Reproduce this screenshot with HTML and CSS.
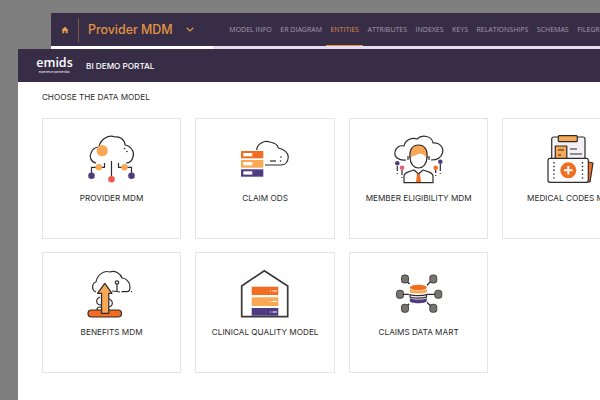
FILE: index.html
```html
<!DOCTYPE html>
<html>
  <head>
    <meta charset="UTF-8">
    <meta name="viewport" content="width=device-width, initial-scale=1.0">
    <title>BI Demo Portal</title>
    <link rel="stylesheet" href="styles.css">
  </head>
  <body>
    <!-- window behind -->
    <div class="back-window">
      <header class="back-header">
        <svg class="home-icon" viewBox="0 0 10 10"><path d="M5 1 L9.5 5.2 H8.2 V9 H6 V6.3 H4 V9 H1.8 V5.2 H.5 Z"/></svg>
        <span class="back-divider"></span>
        <span class="back-title">Provider MDM</span>
        <svg class="chevron" viewBox="0 0 8 5"><path d="M.7 .8 L4 4 L7.3 .8"/></svg>
        <nav class="back-nav">
          <a>MODEL INFO</a>
          <a>ER DIAGRAM</a>
          <a class="active">ENTITIES</a>
          <a>ATTRIBUTES</a>
          <a>INDEXES</a>
          <a>KEYS</a>
          <a>RELATIONSHIPS</a>
          <a>SCHEMAS</a>
          <a>FILEGROUPS</a>
        </nav>
      </header>
      <div class="progress"><div class="progress-fill"></div></div>
    </div>

    <!-- portal window -->
    <div class="portal">
      <header class="portal-header">
        <div class="logo">
          <span class="logo-name">emids</span>
          <span class="logo-tag">experience partnership.</span>
        </div>
        <span class="portal-title">BI DEMO PORTAL</span>
      </header>
      <main class="portal-body">
        <h1 class="section-title">CHOOSE THE DATA MODEL</h1>
        <div class="model-grid">

          <div class="card">
            <svg class="card-icon" viewBox="0 0 80 60">
              <path class="line" d="M24 30 C19 29 17 24 19 20 C20 16 24 14 27 14 C28 7 36 1 43 4 C48 3 53 7 53 12 C59 13 63 19 61 24 C60 28 57 30 54 30"/>
              <path class="line" d="M32.500 30 V34.300 H29 M39.500 28 V43 M46.500 30 V34.300 H50 M19.500 40 V34.300 H24 M59.500 40 V34.300 H55"/>
              <circle class="light" cx="30.200" cy="17.700" r="5.600"/>
              <circle class="light" cx="26.800" cy="34.300" r="3.200"/>
              <circle class="light" cx="52.500" cy="34.300" r="3.200"/>
              <circle class="purple" cx="19.500" cy="42.700" r="3.300"/>
              <circle class="red" cx="39.500" cy="46.300" r="3.300"/>
              <circle class="purple" cx="59.500" cy="42.700" r="3.300"/>
              <circle class="ink" cx="52.500" cy="15.500" r=".8"/>
              <circle class="ink" cx="55" cy="18.500" r=".8"/>
            </svg>
            <span class="card-label">PROVIDER MDM</span>
          </div>

          <div class="card">
            <svg class="card-icon" viewBox="0 0 80 60">
              <path class="line" d="M31.700 17 C32 11 39 7 45 9 C50 10 53 12 53.300 15 C59 16 63.500 20 63.300 24 C63 29 60 32 56 32 H40"/>
              <path class="line" d="M45 28 H51"/>
              <circle class="ink" cx="56" cy="24" r=".8"/>
              <circle class="ink" cx="55.500" cy="28" r=".8"/>
              <rect class="orange" x="16" y="18" width="22.300" height="7.300"/>
              <rect class="light" x="16" y="27" width="22.300" height="7.700"/>
              <rect class="purple" x="16" y="36.300" width="22.300" height="7.400"/>
              <rect class="white" x="18.300" y="20" width="9" height="3.300"/>
              <rect class="white" x="18.300" y="29" width="9" height="3.300"/>
              <rect class="white" x="18.300" y="38.300" width="9" height="3.300"/>
            </svg>
            <span class="card-label">CLAIM ODS</span>
          </div>

          <div class="card">
            <svg class="card-icon" viewBox="0 0 80 60">
              <path class="line" d="M27 27 C20 28 15 24 16 19 C17 14 21 12 25 13 C26 7 33 4 38 6 C43 1 53 3 54 10 C60 9 65 14 63.500 20 C62 25 58 27 52 27"/>
              <path class="light" d="M31 25 C30 16 34 12 39.500 12 C45 12 49 16 48 25 C45 21 42 20 39 21 C36 23 33 23 31 25 Z"/>
              <path class="line" d="M31 25 C30 16 34 12 39.500 12 C45 12 49 16 48 25"/>
              <path class="line" d="M31 24 C31 31 35 35 39.500 35 C44 35 48 31 48 24 M29 23 V27 M50 23 V27"/>
              <path class="line" d="M25 49.700 V43 C25 40 29 39 35 37 L39.500 41 L44 37 C50 39 54 40 54 43 V49.700 Z"/>
              <path class="orange" d="M38 41 H41 L42 49 H37 Z"/>
              <path class="line" d="M18.300 33 V38 M18.300 40 V41 M23 37 V42 M23 44 V45 M56.700 37 V40 M56.700 42 V43 M61.300 31 V38 M61.300 40 V41"/>
              <circle class="purple" cx="18.300" cy="30.300" r="2.300"/>
              <circle class="pink" cx="23" cy="34.700" r="2.300"/>
              <circle class="orange" cx="56.700" cy="34.700" r="2.300"/>
              <circle class="purple" cx="61.300" cy="28.700" r="2.300"/>
            </svg>
            <span class="card-label">MEMBER ELIGIBILITY MDM</span>
          </div>

          <div class="card">
            <svg class="card-icon" viewBox="0 0 80 60">
              <path class="orange line" d="M53 28 L61 30 L58 49 H53 Z"/>
              <rect class="soft line" x="19.700" y="4" width="33.300" height="26" rx="2"/>
              <rect class="light line" x="26.300" y="2.700" width="19" height="6" rx="1"/>
              <rect class="light line" x="23.300" y="13" width="11.500" height="12.500"/>
              <path class="line" d="M38 16 H45 M38 21 H50 M26 17 H32 M26 22 H29"/>
              <rect class="white line" x="16" y="25.300" width="40.300" height="24" rx="2"/>
              <circle class="orange" cx="36.300" cy="37.300" r="8"/>
              <path class="plus" d="M36.300 33 V41.600 M32 37.300 H40.600"/>
              <path class="dots" d="M22 29 V46 M50.500 29 V46"/>
            </svg>
            <span class="card-label">MEDICAL CODES MDM</span>
          </div>

          <div class="card">
            <svg class="card-icon" viewBox="0 0 80 60">
              <path class="line" d="M24 25 C19 23 20 16 24 15 C25 8 32 3 38 5 C43 3 49 7 50 11 C54 11 58 15 58 20 C58 23 57 24.700 55 24.700 H49.500"/>
              <path class="line" d="M48 25 C44 25 45 24 40 24 M45 17 V24"/>
              <circle class="white line" cx="45" cy="15.500" r="1.700"/>
              <path class="line" d="M59 24.700 H60 M28 30 C23 32 24 38 29 38 M37 32 C42 34 41 40 36 40 H28 C24 40 24 46 28 46"/>
              <rect class="orange line" x="16" y="43" width="33.500" height="7" rx="3.500"/>
              <path class="light line" d="M32.800 16.300 L40 26.300 H36.800 V46.300 H29.500 V26.300 H25.500 Z"/>
            </svg>
            <span class="card-label">BENEFITS MDM</span>
          </div>

          <div class="card">
            <svg class="card-icon" viewBox="0 0 80 60">
              <path class="line wall" d="M16.700 49.700 V19 L39.300 3.700 L62.700 19 V49.700 Z"/>
              <rect class="orange" x="26.700" y="19.700" width="26.600" height="8.300"/>
              <rect class="light" x="26.700" y="30.300" width="26.600" height="8.700"/>
              <rect class="purple" x="26.700" y="41" width="26.600" height="7.700"/>
              <path class="chip" d="M45 24 H46 M47.500 24 H52 M45 34.500 H46 M47.500 34.500 H52 M45 45 H46 M47.500 45 H52"/>
            </svg>
            <span class="card-label">CLINICAL QUALITY MODEL</span>
          </div>

          <div class="card">
            <svg class="card-icon" viewBox="0 0 80 60">
              <path class="line" d="M26 12 L39 27 L54.300 12 M21 27.300 H59.300 M26 41.300 L39 27 L54.300 41.300"/>
              <rect class="white" x="30" y="17" width="18" height="20"/>
              <ellipse class="orange" cx="39.300" cy="20.500" rx="8.500" ry="2.800"/>
              <path class="light" d="M30.800 22 V25 C31 27 47.500 27 47.800 25 V22 C44 24 35 24 30.800 22 Z"/>
              <path class="soft line" d="M31 27.500 C34 29 44 29 47.500 27.500 V30 C44 31.500 34 31.500 31 30 Z"/>
              <path class="purple" d="M30.800 31 V34 C31 37 47.500 37 47.800 34 V31 C44 33 35 33 30.800 31 Z"/>
              <g class="db">
                <rect x="22.500" y="8" width="7" height="8" rx="2.500"/>
                <rect x="50.800" y="8" width="7" height="8" rx="2.500"/>
                <rect x="17.500" y="23.300" width="7" height="8" rx="2.500"/>
                <rect x="55.800" y="23.300" width="7" height="8" rx="2.500"/>
                <rect x="22.500" y="37.300" width="7" height="8" rx="2.500"/>
                <rect x="50.800" y="37.300" width="7" height="8" rx="2.500"/>
              </g>
            </svg>
            <span class="card-label">CLAIMS DATA MART</span>
          </div>

        </div>
      </main>
    </div>
  </body>
</html>
```

FILE: styles.css
```css
html, body {
  height: 100%;
}
body {
  margin: 0;
  background-color: #7f7f7f;
  font-family: Inter, 'Liberation Sans', sans-serif;
  overflow: hidden;
}

/* window behind */
.back-window {
  position: absolute;
  left: 51px;
  top: 13px;
  right: 0;
}
.back-header {
  display: flex;
  align-items: center;
  height: 33px;
  background: #382d47;
}
.home-icon {
  flex: none;
  width: 8px;
  height: 8px;
  margin-left: 10px;
  fill: #eda04e;
}
.back-divider {
  flex: none;
  width: 1px;
  height: 24px;
  margin-left: 9px;
  background: #7b5a44;
}
.back-title {
  flex: none;
  margin-left: 9px;
  font-size: 12.4px;
  font-weight: 500;
  color: #e09440;
  white-space: nowrap;
}
.chevron {
  flex: none;
  width: 8px;
  height: 5px;
  margin-left: 13px;
  fill: none;
  stroke: #e09440;
  stroke-width: 1.2;
}
.back-nav {
  display: flex;
  align-self: stretch;
  margin-left: 31.5px;
  font-family: 'Open Sans', sans-serif;
  font-size: 7px;
  color: #a49cb1;
  white-space: nowrap;
}
.back-nav a {
  display: flex;
  align-items: center;
  padding: 1px 4.25px 0;
  border-bottom: 1px solid transparent;
}
.back-nav a.active {
  color: #df8a4c;
  border-bottom-color: #e09440;
}
.progress {
  height: 3px;
  background: #e4dbee;
}
.progress-fill {
  width: 162px;
  height: 100%;
  background: #fff;
}

/* portal window */
.portal {
  position: absolute;
  left: 18px;
  top: 49px;
  right: 0;
  bottom: 0;
  background: #fff;
  overflow: hidden;
}
.portal-header {
  display: flex;
  align-items: center;
  height: 33px;
  padding-left: 18px;
  background: #382d47;
  color: #fff;
}
.logo {
  display: flex;
  flex-direction: column;
  align-items: center;
  width: 37px;
  margin-bottom: 3px;
}
.logo-name {
  font-family: 'Open Sans', sans-serif;
  font-size: 12.5px;
  font-weight: 600;
}
.logo-tag {
  font-size: 2.8px;
  line-height: 3px;
  white-space: nowrap;
}
.portal-title {
  margin-left: 13px;
  font-size: 8.2px;
  font-weight: 500;
}
.portal-body {
  padding: 9px 23.9px 0;
}
.section-title {
  margin: 0 0 15px;
  font-size: 8.2px;
  font-weight: 400;
  line-height: 12px;
  color: #2b2b2b;
}
.model-grid {
  display: grid;
  grid-template-columns: repeat(4, 139.4px);
  grid-auto-rows: 120.5px;
  gap: 13.5px 14.15px;
}
.card {
  display: flex;
  flex-direction: column;
  align-items: center;
  padding-top: 14px;
  box-sizing: border-box;
  border: 1px solid #e5e5e5;
  background: #fff;
}
.card-icon {
  flex: none;
  width: 80px;
  height: 60px;
}
.card-label {
  margin-top: -1px;
  font-size: 8.2px;
  font-weight: 400;
  line-height: 12px;
  color: #2b2b2b;
  white-space: nowrap;
}

/* icon colours */
.line {
  fill: none;
  stroke: #2f2b2d;
  stroke-width: 1.2;
  stroke-linejoin: round;
}
.wall {
  stroke: #3d3838;
  stroke-width: 1.7;
  stroke-linejoin: miter;
}
.ink { fill: #2f2b2d; }
.white { fill: #fff; }
.orange { fill: #f26c22; }
.light { fill: #f9a856; }
.purple { fill: #4f3b82; }
.red { fill: #ee5a50; }
.pink { fill: #e85a78; }
.soft { fill: #f3f1f4; }
.plus {
  fill: none;
  stroke: #fff;
  stroke-width: 2;
}
.dots {
  fill: none;
  stroke: #2f2b2d;
  stroke-width: 1.4;
  stroke-dasharray: 1.4 2.4;
}
.chip {
  fill: none;
  stroke: #fff;
  stroke-width: 1.2;
}
.db {
  fill: #77736f;
  stroke: #2f2b2d;
  stroke-width: .8;
}
.line.orange { fill: #f26c22; }
.line.light { fill: #f9a856; }
.line.white { fill: #fff; }
.line.soft { fill: #f3f1f4; }
```
